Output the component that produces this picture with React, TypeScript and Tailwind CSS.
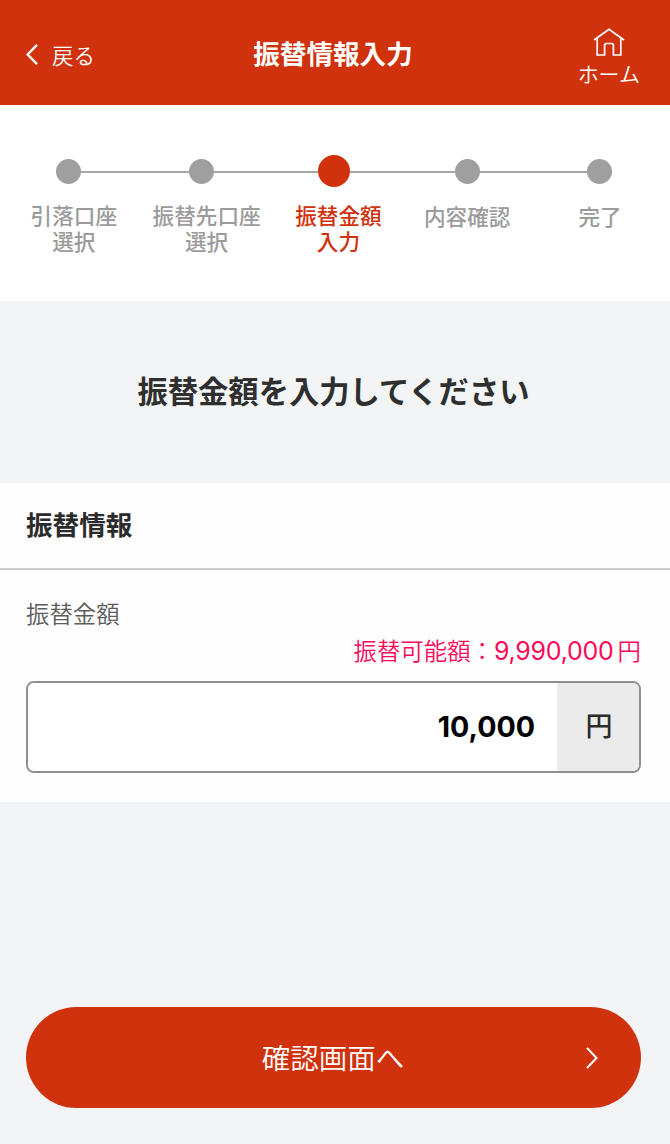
import clsx from 'clsx';

interface Step {
  lines: string[];
  active?: boolean;
}

const STEPS: Step[] = [
  { lines: ['引落口座', '選択'] },
  { lines: ['振替先口座', '選択'] },
  { lines: ['振替金額', '入力'], active: true },
  { lines: ['内容確認'] },
  { lines: ['完了'] },
];

function HomeIcon() {
  return (
    <svg width="32" height="30" viewBox="0 0 32 30" fill="none" stroke="currentColor" strokeWidth="1.7">
      <path d="M1 13 16 2.3 31 13" />
      <path d="M4.2 10.8V28h7.4V18.5a2 2 0 0 1 2-2h4.8a2 2 0 0 1 2 2V28h7.4V10.8" />
    </svg>
  );
}

function Header() {
  return (
    <header className="grid h-[105px] grid-cols-[1fr_auto_1fr] items-center bg-[#cf320c] pr-[30px] pl-[26px] text-white">
      <button className="mt-[3px] flex items-center gap-[14px] text-[21.4px] leading-8 font-[350]">
        <svg width="12" height="21" viewBox="0 0 12 21" fill="none" stroke="currentColor" strokeWidth="2.4">
          <path d="M11 0.8 1.6 10.5 11 20.2" />
        </svg>
        <span className="pt-px">戻る</span>
      </button>
      <h1 className="text-[26.6px] leading-10 font-bold">振替情報入力</h1>
      <button className="mt-[10px] flex flex-col items-center justify-self-end text-[21px] leading-8 font-[350]">
        <HomeIcon />
        <span>ホーム</span>
      </button>
    </header>
  );
}

function StepBar() {
  return (
    <ol className="flex h-[196px] bg-white pt-[50px] pl-[2.4px]">
      {STEPS.map((step, i) => (
        <li key={step.lines[0]} className="w-[132.8px] shrink-0">
          <div className="flex h-8 items-center">
            <span className={clsx('mt-px h-[2px] flex-1', i > 0 && 'bg-[#a6a6a6]')} />
            <span
              className={clsx(
                'rounded-full',
                step.active ? 'size-8 bg-[#cf320c]' : 'size-[25px] bg-[#9f9f9f]',
              )}
            />
            <span className={clsx('mt-px h-[2px] flex-1', i < STEPS.length - 1 && 'bg-[#a6a6a6]')} />
          </div>
          <p
            className={clsx(
              'text-center text-[21.6px] leading-[26px] font-medium whitespace-nowrap',
              step.active ? 'text-[#cf320c]' : 'text-[#9b9b9b]',
              step.lines.length > 1 ? 'mt-[15px]' : 'mt-4',
              step.lines.length > 1 && (step.active ? 'pl-[8px]' : 'pl-[10px]'),
            )}
          >
            {step.lines.map((line) => (
              <span key={line} className="block">
                {line}
              </span>
            ))}
          </p>
        </li>
      ))}
    </ol>
  );
}

function AmountForm() {
  return (
    <section className="h-[319px] bg-[#fefefe]">
      <h3 className="h-[87px] border-b-2 border-[#cccccc] pt-[21px] pl-[26px] text-[26.6px] leading-10 font-bold text-[#2b2b2b]">
        振替情報
      </h3>
      <div className="pt-[25px] pr-[29px] pl-[26px]">
        <label htmlFor="amount" className="block text-[23.4px] leading-9 font-[350] text-[#5c5c5c]">
          振替金額
        </label>
        <p className="mt-px flex justify-end text-[23.4px] leading-9 font-[350] text-[#fb0a5a]">
          <span>振替可能額：</span>
          <span className="pt-px font-[Inter] text-[25px] font-normal tracking-[-0.25px]">9,990,000</span>
          <span className="ml-[4px]">円</span>
        </p>
        <div className="mt-[12px] flex h-[92px] overflow-hidden rounded-lg border-2 border-[#8f8f8f]">
          <input
            id="amount"
            defaultValue="10,000"
            className="min-w-0 flex-1 bg-white pr-[22px] text-right font-[Inter] text-[28.6px] font-bold text-black outline-none"
          />
          <span className="flex w-[82px] items-center justify-center bg-[#ebebeb] pb-[3px] pl-[2px] text-[27px] font-medium text-[#2b2b2b]">
            円
          </span>
        </div>
      </div>
    </section>
  );
}

export default function App() {
  return (
    <div
      lang="ja"
      className="flex h-[1144px] w-[670px] flex-col overflow-hidden bg-[#f2f4f6] font-['Noto_Sans_CJK_JP',sans-serif]"
    >
      <Header />
      <StepBar />
      <h2 className="h-[182px] pt-[67px] pr-[3px] text-center text-[30.3px] leading-[44px] font-bold text-[#2f2f2f]">
        振替金額を入力してください
      </h2>
      <AmountForm />
      <div className="mt-auto pr-[29px] pb-[36px] pl-[26px]">
        <button className="grid h-[101px] w-full grid-cols-[1fr_auto_1fr] items-center rounded-full bg-[#cf320c] pr-[43px] pl-[42px] text-[28.5px] font-[350] text-white">
          <span className="col-start-2">確認画面へ</span>
          <svg
            className="justify-self-end"
            width="12"
            height="22"
            viewBox="0 0 12 22"
            fill="none"
            stroke="currentColor"
            strokeWidth="2"
          >
            <path d="M1 1 10.5 11 1 21" />
          </svg>
        </button>
      </div>
    </div>
  );
}
